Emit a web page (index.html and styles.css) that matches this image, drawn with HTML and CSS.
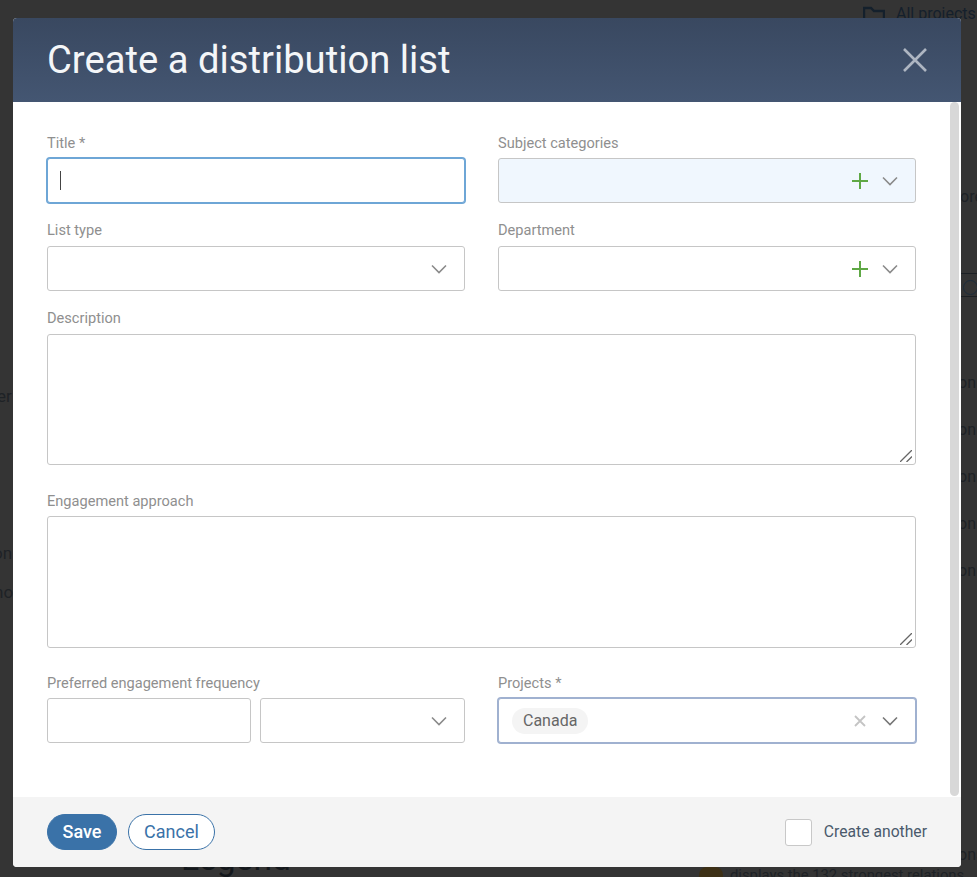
FILE: index.html
```html
<!DOCTYPE html>
<html lang="en">
<head>
<meta charset="utf-8">
<title>Create a distribution list</title>
<link rel="stylesheet" href="styles.css">
</head>
<body>
<div class="backdrop">
  <svg class="bg-folder" width="22" height="18" viewBox="0 0 22 18"><path d="M1 17V2h7l3 3h10v12" fill="none" stroke="#14202c" stroke-width="2.4"/></svg>
  <span class="bg bg-projects">All projects</span>
  <span class="bg bg-more">ore</span>
  <span class="bg bg-er">er</span>
  <span class="bg bg-on1">on</span>
  <span class="bg bg-on2">on</span>
  <span class="bg bg-on3">on</span>
  <span class="bg bg-on4">on</span>
  <span class="bg bg-on5">on</span>
  <span class="bg bg-lon">on</span>
  <span class="bg bg-no">no</span>
  <span class="bg bg-ons">ons</span>
  <span class="bg bg-legend">Legend</span>
  <span class="bg bg-rel">displays the 132 strongest relations</span>
  <span class="bg-badge"></span>
  <span class="bg-search"></span>
</div>

<div class="modal">
  <header class="modal-head">
    <h1 class="modal-title">Create a distribution list</h1>
    <svg class="close" width="26" height="26" viewBox="0 0 26 26"><path d="M2 2l22 22M24 2L2 24" stroke="#aeb6c2" stroke-width="2.6" fill="none"/></svg>
  </header>

  <div class="modal-body">
    <form class="form">
      <div class="row two low">
        <div class="field">
          <label class="label">Title *</label>
          <div class="box focus"><span class="caret"></span></div>
        </div>
        <div class="field">
          <label class="label">Subject categories</label>
          <div class="box tinted">
            <svg class="plus" width="16" height="16" viewBox="0 0 16 16"><path d="M8 0v16M0 8h16" stroke="#5fa845" stroke-width="2" fill="none"/></svg>
            <svg class="chev" width="16" height="10" viewBox="0 0 16 10"><path d="M1 1.5l7 7 7-7" stroke="#8a8a8a" stroke-width="1.6" fill="none"/></svg>
          </div>
        </div>
      </div>

      <div class="row two">
        <div class="field">
          <label class="label">List type</label>
          <div class="box">
            <svg class="chev" width="16" height="10" viewBox="0 0 16 10"><path d="M1 1.5l7 7 7-7" stroke="#8a8a8a" stroke-width="1.6" fill="none"/></svg>
          </div>
        </div>
        <div class="field">
          <label class="label">Department</label>
          <div class="box">
            <svg class="plus" width="16" height="16" viewBox="0 0 16 16"><path d="M8 0v16M0 8h16" stroke="#5fa845" stroke-width="2" fill="none"/></svg>
            <svg class="chev" width="16" height="10" viewBox="0 0 16 10"><path d="M1 1.5l7 7 7-7" stroke="#8a8a8a" stroke-width="1.6" fill="none"/></svg>
          </div>
        </div>
      </div>

      <div class="row">
        <div class="field">
          <label class="label">Description</label>
          <div class="area-wrap">
            <textarea class="area area-a"></textarea>
            <svg class="grip" width="12" height="12" viewBox="0 0 12 12"><path d="M0 12L12 0M6.5 12L12 6.5" stroke="#666" stroke-width="1.3" fill="none"/></svg>
          </div>
        </div>
      </div>

      <div class="row row-approach low">
        <div class="field">
          <label class="label">Engagement approach</label>
          <div class="area-wrap">
            <textarea class="area area-b"></textarea>
            <svg class="grip" width="12" height="12" viewBox="0 0 12 12"><path d="M0 12L12 0M6.5 12L12 6.5" stroke="#666" stroke-width="1.3" fill="none"/></svg>
          </div>
        </div>
      </div>

      <div class="row two row-last low">
        <div class="field">
          <label class="label">Preferred engagement frequency</label>
          <div class="pair">
            <div class="box"></div>
            <div class="box">
              <svg class="chev" width="16" height="10" viewBox="0 0 16 10"><path d="M1 1.5l7 7 7-7" stroke="#8a8a8a" stroke-width="1.6" fill="none"/></svg>
            </div>
          </div>
        </div>
        <div class="field">
          <label class="label">Projects *</label>
          <div class="box selected">
            <span class="chip">Canada</span>
            <svg class="clear" width="12" height="12" viewBox="0 0 12 12"><path d="M1 1l10 10M11 1L1 11" stroke="#c4c4c4" stroke-width="1.8" fill="none"/></svg>
            <svg class="chev" width="16" height="10" viewBox="0 0 16 10"><path d="M1 1.5l7 7 7-7" stroke="#777" stroke-width="1.6" fill="none"/></svg>
          </div>
        </div>
      </div>
    </form>
    <div class="scrollbar"></div>
  </div>

  <footer class="modal-foot">
    <button class="btn primary" type="button">Save</button>
    <button class="btn ghost" type="button">Cancel</button>
    <span class="spacer"></span>
    <span class="checkbox"></span>
    <span class="check-label">Create another</span>
  </footer>
</div>
</body>
</html>
```

FILE: styles.css
```css
* { box-sizing: border-box; }
html, body { margin: 0; height: 100%; }
body {
  width: 977px;
  height: 877px;
  overflow: hidden;
  position: relative;
  background: #343434;
  font-family: Roboto, "Liberation Sans", sans-serif;
}

/* dimmed page behind the dialog */
.backdrop { position: absolute; inset: 0; overflow: hidden; }
.bg { position: absolute; color: #1e2226; font-size: 16px; line-height: 20px; white-space: nowrap; }
.bg-folder { position: absolute; left: 863px; top: 6px; }
.bg-projects { left: 896px; top: 4px; color: #14202c; }
.bg-more { left: 960px; top: 187px; font-size: 16px; }
.bg-er { left: -3px; top: 386px; font-size: 17px; }
.bg-on1, .bg-on2, .bg-on3, .bg-on4, .bg-on5 { left: 958px; font-size: 16px; }
.bg-on1 { top: 373px; }
.bg-on2 { top: 420px; }
.bg-on3 { top: 467px; }
.bg-on4 { top: 514px; }
.bg-on5 { top: 561px; }
.bg-lon { left: -7px; top: 543px; font-size: 17px; }
.bg-no { left: -6px; top: 582px; font-size: 17px; }
.bg-ons { left: 958px; top: 845px; font-size: 16px; }
.bg-legend { left: 181px; top: 840px; font-size: 33.5px; line-height: 38px; color: #14181c; }
.bg-rel { left: 730px; top: 865px; font-size: 14.8px; }
.bg-badge { position: absolute; left: 699px; top: 867px; width: 24px; height: 14px; border-radius: 8px 8px 0 0; background: #3d3016; }
.bg-search { position: absolute; left: 961px; top: 273px; width: 16px; height: 24px; border-top: 1px solid #1c2024; border-bottom: 1px solid #1c2024; }
.bg-search::after { content: ""; position: absolute; left: 2px; top: 6px; width: 13px; height: 13px; border: 1.5px solid #1c2c3c; border-radius: 50%; }

/* dialog */
.modal {
  position: absolute;
  left: 13px;
  top: 18px;
  width: 948px;
  height: 849px;
  display: flex;
  flex-direction: column;
  border-radius: 4px;
  overflow: hidden;
  background: #fff;
}
.modal-head {
  height: 84px;
  flex: none;
  display: flex;
  align-items: center;
  justify-content: space-between;
  padding: 0 33px 0 34px;
  background: linear-gradient(#394860, #445672);
}
.modal-title { margin: 0; font-size: 38.2px; font-weight: 400; line-height: 84px; color: #f4f6f8; }
.close { display: block; }

.modal-body { flex: 1; position: relative; min-height: 0; }
.form { padding: 30px 45px 0 34px; display: flex; flex-direction: column; gap: 17px; }
.scrollbar { position: absolute; right: 2px; top: 0; bottom: 1px; width: 9px; border-radius: 5px; background: #d8d8d8; }

.row { display: flex; }
.row.two { gap: 33px; }
.row-approach { margin-top: 8px; }
.row-last { margin-top: 7px; }
.field { flex: 1; min-width: 0; display: flex; flex-direction: column; gap: 6px; }
.label { display: block; font-size: 14.6px; line-height: 20px; color: #8f8f8f; }
.low .label { margin-top: 1px; margin-bottom: -1px; }

.box {
  height: 45px;
  display: flex;
  align-items: center;
  justify-content: flex-end;
  padding: 0 17px 0 13px;
  border: 1px solid #c6c6c6;
  border-radius: 3px;
  background: #fff;
}
.box.focus { justify-content: flex-start; border-color: #6ea6d6; box-shadow: 0 0 0 1px #6ea6d6; padding-left: 12px; }
.box.tinted { background: #f0f7fe; }
.box.selected { border-color: #a0b1d0; box-shadow: 0 0 0 1px #a0b1d0; }
.caret { width: 1px; height: 19px; background: #444; }
.plus { margin-right: 14px; }
.clear { margin-right: 16px; margin-left: auto; }
.pair { display: flex; gap: 9px; }
.pair .box { flex: 1; }
.pair .box:first-child { flex: none; width: 204px; }
.chip {
  height: 26px;
  padding: 0 11px;
  border-radius: 13px;
  background: #f4f4f4;
  color: #666;
  font-size: 16px;
  line-height: 26px;
}
.area-wrap { position: relative; }
.area {
  display: block;
  width: 100%;
  padding: 8px 12px;
  border: 1px solid #c6c6c6;
  border-radius: 3px;
  background: #fff;
  outline: none;
  resize: none;
  font: inherit;
}
.area-a { height: 131px; }
.area-b { height: 132px; }
.grip { position: absolute; right: 4px; bottom: 3px; }

.modal-foot {
  height: 70px;
  flex: none;
  display: flex;
  align-items: center;
  padding: 0 34px;
  background: #f4f4f4;
}
.btn {
  height: 36px;
  border-radius: 18px;
  font-family: inherit;
  font-size: 18px;
  padding: 0 0 1px;
  border: 1px solid #3a72a8;
}
.primary { width: 70px; background: #3a72a8; color: #fff; font-weight: 500; }
.ghost { width: 87px; margin-left: 11px; background: #fff; color: #3a72a8; }
.spacer { flex: 1; }
.checkbox { width: 27px; height: 27px; border: 1px solid #c8c8c8; border-radius: 3px; background: #fff; }
.check-label { margin-left: 12px; padding-bottom: 2px; font-size: 15.7px; color: #4a5a6c; }
```
